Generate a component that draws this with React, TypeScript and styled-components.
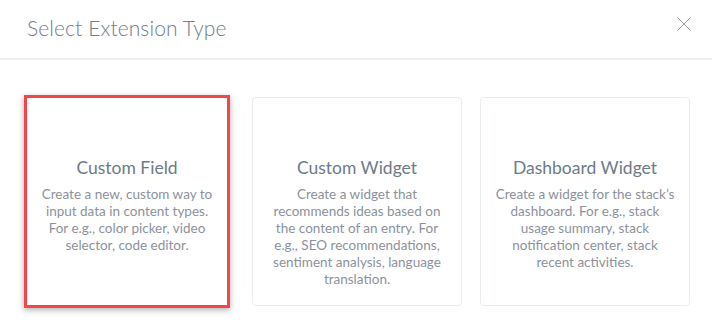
import { createGlobalStyle, styled } from 'styled-components';

const GlobalStyle = createGlobalStyle`
  body {
    margin: 0;
    background: #ffffff;
    font-family: Lato, "Liberation Sans", sans-serif;
  }
`;

type ExtensionType = {
  title: string;
  description: string;
  selected?: boolean;
};

const extensionTypes: ExtensionType[] = [
  {
    title: 'Custom Field',
    description:
      'Create a new, custom way to input data in content types. For e.g., color picker, video selector, code editor.',
    selected: true,
  },
  {
    title: 'Custom Widget',
    description:
      'Create a widget that recommends ideas based on the content of an entry. For e.g., SEO recommendations, sentiment analysis, language translation.',
  },
  {
    title: 'Dashboard Widget',
    description:
      'Create a widget for the stack’s dashboard. For e.g., stack usage summary, stack notification center, stack recent activities.',
  },
];

const CloseIcon = () => (
  <svg width="14" height="14" viewBox="0 0 14 14" fill="none">
    <path d="M0.5 0.5L13.5 13.5M13.5 0.5L0.5 13.5" stroke="#9a9a9a" strokeWidth="1" />
  </svg>
);

/**
 * 확장 타입을 고르는 모달 화면입니다.
 */
const App = () => {
  return (
    <>
      <GlobalStyle />
      <Modal>
        <Header>
          <Title>Select Extension Type</Title>
          <CloseButton aria-label="Close">
            <CloseIcon />
          </CloseButton>
        </Header>
        <CardGrid>
          {extensionTypes.map((type) => (
            <Cell key={type.title}>
              <Card $selected={type.selected}>
                <CardTitle>{type.title}</CardTitle>
                <CardText>{type.description}</CardText>
              </Card>
            </Cell>
          ))}
        </CardGrid>
      </Modal>
    </>
  );
};

export default App;

const Modal = styled.div`
  width: 712px;
  height: 333px;
  background: #ffffff;
  overflow: hidden;
`;

const Header = styled.div`
  display: flex;
  align-items: center;
  justify-content: space-between;
  height: 58px;
  padding: 0 21px 0 27px;
  border-bottom: 2px solid #eeeeee;
`;

const Title = styled.h2`
  margin: 0;
  margin-top: -4px;
  font-size: 21px;
  font-weight: 300;
  letter-spacing: 0.1px;
  color: #6f7d8a;
`;

const CloseButton = styled.button`
  display: flex;
  padding: 0;
  margin-top: -10px;
  border: none;
  background: none;
  cursor: pointer;
`;

const CardGrid = styled.div`
  display: grid;
  grid-template-columns: repeat(3, 210px);
  gap: 18px;
  padding: 35px 0 0 24px;
`;

const Cell = styled.div`
  display: flex;
  height: 213px;
  align-items: center;
`;

const Card = styled.div<{ $selected?: boolean }>`
  box-sizing: border-box;
  display: flex;
  flex-direction: column;
  align-items: center;
  width: ${(p) => (p.$selected ? '206px' : '210px')};
  height: ${(p) => (p.$selected ? '213px' : '209px')};
  padding: 59px 14px 0;
  border: ${(p) => (p.$selected ? '3px solid #f2464b' : '1px solid #e8edf0')};
  border-radius: ${(p) => (p.$selected ? '0' : '4px')};
  box-shadow: ${(p) => (p.$selected ? '0 2px 6px rgba(0, 0, 0, 0.32)' : 'none')};
  text-align: center;
  background: #ffffff;
`;

const CardTitle = styled.div`
  font-size: 17.5px;
  line-height: 22px;
  color: #6c7b88;
  margin-bottom: 7px;
`;

const CardText = styled.div`
  font-size: 13.5px;
  line-height: 17px;
  color: #8c929c;
`;
